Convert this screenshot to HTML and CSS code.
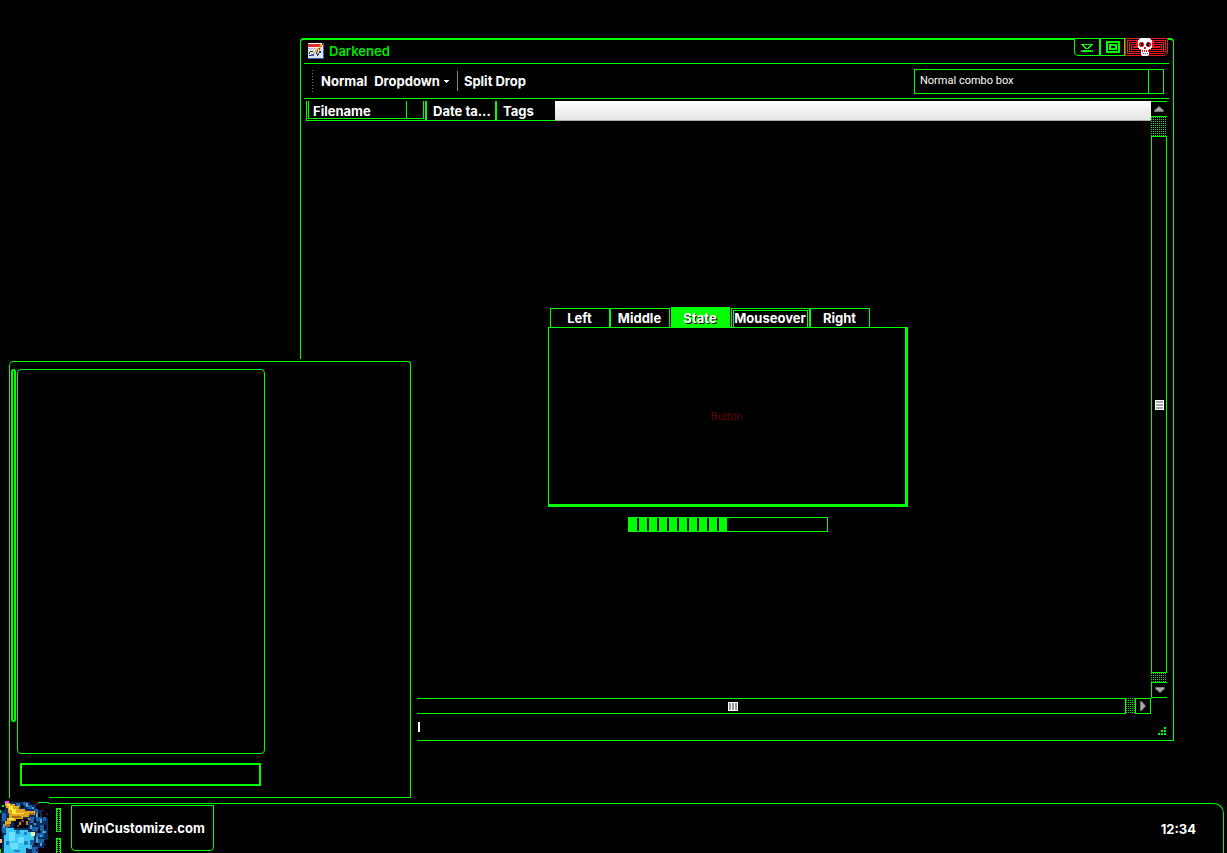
FILE: index.html
```html
<!DOCTYPE html>
<html lang="en">
<head>
<meta charset="utf-8">
<title>Darkened</title>
<link rel="stylesheet" href="styles.css">
</head>
<body>
<main class="desktop">
  <section class="window">
    <header class="titlebar">
      <svg class="app-icon" width="16" height="16" viewBox="0 0 16 16" shape-rendering="crispEdges" aria-hidden="true">
        <path fill="#dce4f4" d="M0 0h16v16H0z"/><path fill="#e02c2c" d="M0 1h14v3H0z"/><path fill="#f8f8f8" d="M0 4h14v2H0zM0 0h14v1H0z"/><path fill="#b8bcc8" d="M0 5h13v1H0z"/>
        <path fill="#283048" d="M2 8h3v1H2zM1 9h1v2H1zM5 9h1v2H5zM1 12h3v1H1zM8 8h1v3H8zM9 11h1v2H9zM10 10h1v2h-1zM11 8h2v2h-2z"/>
        <path fill="#f0b020" d="M12 1h2v2h-2zM11 3h2v2h-2zM9 5h2v2H9zM7 7h2v2H7zM5 9h2v2H5z"/><path fill="#4058c0" d="M3 11h3v2H3zM15 0h1v16h-1zM0 15h16v1H0z"/><path fill="#803020" d="M14 0h1v2h-1zM11 5h1v2h-1zM9 7h1v2H9z"/>
      </svg>
      <h1 class="title">Darkened</h1>
      <div class="controls">
        <button class="control minimize" aria-label="Minimize"><svg width="12" height="8" viewBox="0 0 12 8" shape-rendering="crispEdges"><path fill="#0f0" d="M0 0h12v1H0zM1 1h2v1H1zM9 1h2v1H9zM2 2h2v1H2zM8 2h2v1H8zM3 3h2v1H3zM7 3h2v1H7zM4 4h4v1H4zM2 6h8v1H2zM0 7h12v1H0zM0 6h1v1H0zM11 6h1v1h-1z"/></svg></button>
        <button class="control maximize" aria-label="Maximize"><svg width="14" height="12" viewBox="0 0 14 12" shape-rendering="crispEdges"><path fill="#0f0" fill-rule="evenodd" d="M0 0h14v12H0zM2 2v8h10V2zM3 3h8v6H3zM5 5v2h4V5z"/></svg></button>
        <button class="control close" aria-label="Close"><svg width="43" height="18" viewBox="0 0 43 18" shape-rendering="crispEdges">
          <path fill="none" stroke="#f01820" d="M.5.5h42v14l-3 3H.5zM2.500 2.500h38v11l-2 2h-36zM4.500 4.500h34v9h-34zM6.500 6.500h30v5h-30zM8.500 8.500h26v1h-26z"/>
          <path fill="#f01820" d="M11 3h2v5h-2zM27 3h2v5h-2z"/>
          <path fill="#fff" d="M15 0h10v1h1v1h1v8h-1v1h-2v6h-1v1h-6v-1h-1v-6h-2v-1h-1V2h1V1h1z"/>
          <path fill="#e01820" d="M15 4h3v1h1v3h-1v1h-3V8h-1V5h1zM22 4h3v1h1v3h-1v1h-3V8h-1V5h1zM19 9h2v2h-2zM17 12h1v2h-1zM19 12h1v2h-1zM21 12h1v2h-1zM23 12h1v2h-1zM18 15h1v1h-1zM20 15h1v1h-1zM22 15h1v1h-1z"/>
          <path fill="#000" d="M16 5h2v3h-2zM22 5h2v3h-2z"/>
        </svg></button>
      </div>
    </header>
    <div class="toolbar">
      <span class="grip"></span>
      <button class="tool">Normal</button>
      <button class="tool dropdown">Dropdown <svg width="5" height="3" viewBox="0 0 5 3" shape-rendering="crispEdges"><path fill="#fff" d="M0 0h5v1H4v1H3v1H2V2H1V1H0z"/></svg></button>
      <button class="tool split">Split Drop</button>
      <select class="combo" aria-label="Combo box"><option>Normal combo box</option></select>
    </div>
    <div class="view">
      <div class="pane">
        <div class="columns">
          <button class="column filename"><span class="column-label">Filename</span></button>
          <button class="column date">Date ta...</button>
          <button class="column tags">Tags</button>
          <span class="columns-rest"></span>
        </div>
        <div class="content">
          <div class="tabs" role="tablist">
            <button class="tab" role="tab">Left</button>
            <button class="tab" role="tab">Middle</button>
            <button class="tab selected" role="tab" aria-selected="true">State</button>
            <button class="tab hover" role="tab"><span class="tab-label">Mouseover</span></button>
            <button class="tab" role="tab">Right</button>
          </div>
          <div class="panel" role="tabpanel"><button class="panel-button" disabled>Button</button></div>
          <div class="progress" role="progressbar" aria-label="Progress" aria-valuenow="50"><div class="progress-fill" style="width: 50%"></div></div>
        </div>
        <div class="hscroll">
          <div class="hthumb"><svg width="10" height="9" viewBox="0 0 10 9" shape-rendering="crispEdges"><path fill="#fff" d="M0 0h10v9H0z"/><path fill="#999" d="M1 1h2v7H1zM4 1h2v7H4zM7 1h2v7H7z"/></svg></div>
          <span class="dots htrack"></span>
          <button class="arrow right" aria-label="Scroll right"><svg width="6" height="10" viewBox="0 0 6 10"><path fill="#aaa" stroke="#777" d="M.5.5h1l4 4.500-4 4.500h-1z"/></svg></button>
        </div>
      </div>
      <div class="vscroll">
        <button class="arrow up" aria-label="Scroll up"><svg width="10" height="6" viewBox="0 0 10 6"><path fill="#aaa" stroke="#777" d="M.5 5.500v-1l4.500-4 4.500 4v1z"/></svg></button>
        <span class="dots vtrack"></span>
        <div class="vthumb"><svg width="9" height="10" viewBox="0 0 9 10" shape-rendering="crispEdges"><path fill="#fff" d="M0 0h9v10H0z"/><path fill="#aaa" d="M1 1h7v2H1zM1 4h7v2H1zM1 7h7v2H1z"/></svg></div>
        <span class="dots vtrack-end"></span>
        <button class="arrow down" aria-label="Scroll down"><svg width="10" height="6" viewBox="0 0 10 6"><path fill="#aaa" stroke="#777" d="M.5.5v1l4.500 4 4.500-4v-1z"/></svg></button>
      </div>
    </div>
    <footer class="status">
      <span class="caret"></span>
      <svg class="resize" width="8" height="8" viewBox="0 0 8 8" shape-rendering="crispEdges"><path fill="#0f0" d="M6 0h2v2H6zM3 3h2v2H3zM6 3h2v2H6zM0 6h2v2H0zM3 6h2v2H3zM6 6h2v2H6z"/></svg>
    </footer>
  </section>
  <section class="start-menu" aria-label="Start menu">
    <div class="rail"></div>
    <div class="start-left">
      <div class="programs"></div>
      <input class="search" type="text" aria-label="Search">
    </div>
  </section>
</main>
<footer class="taskbar">
  <button class="orb" aria-label="Start">
    <svg width="49" height="52" viewBox="0 0 49 52" shape-rendering="crispEdges">
      <path fill="#0b2c5c" d="M8 1h22v2h6v6h6v8h6v22h-4v8h-6v5H2V30H1V9h4V3h3z"/>
      <path fill="#1b62a8" d="M16 2h4v3h-4zM23 1h4v4h-4zM28 4h4v4h-4zM34 8h4v4h-4zM36 16h6v4h-6zM40 24h4v6h-4zM32 26h6v4h-6zM36 32h8v4h-8zM30 36h4v8h-4zM2 12h4v8H2zM2 26h6v6H2zM38 38h6v4h-6zM32 46h6v6h-6zM30 16h4v6h-4zM43 16h3v4h-3z"/>
      <path fill="#4aa4d8" d="M18 4h2v2h-2zM26 2h2v4h-2zM32 6h2v2h-2zM36 12h2v4h-2zM40 18h2v4h-2zM30 24h2v4h-2zM42 30h4v2h-4zM36 36h2v6h-2zM28 44h4v4h-4zM40 34h2v2h-2zM3 23h2v4H3zM34 22h2v2h-2zM40 42h2v3h-2z"/>
      <path fill="#000" d="M14 18h14v9H14zM21 4h3v3h-3zM38 12h2v4h-2zM34 18h2v4h-2zM38 28h2v4h-2zM44 24h2v4h-2zM34 42h4v2h-4zM30 1h3v3h-3z"/>
      <path fill="#3ccaf4" d="M6 27h8v2h14v2h6v8h-4v8h-4v5H4V34h2z"/>
      <path fill="#6ae0fa" d="M9 31h6v9H9zM18 36h6v6h-6zM10 42h8v6h-8z"/>
      <path fill="#2082c4" d="M16 29h4v4h-4zM6 40h3v4H6zM24 40h4v4h-4zM14 49h6v2h-6zM24 31h3v3h-3z"/>
      <path fill="#e3a51c" d="M5 2h5v1h5v2h4v3h6v2h10v4h-6v2h-6v2h-7v2h-5v3H8v2H5v-5h2v-3h2v-5H8V7H6z"/>
      <path fill="#ffe43a" d="M7 3h3v2h3v3h3v4h8v1H12V9H9V5H7zM9 17h5v2H9z"/>
      <path fill="#a8681a" d="M12 15h9v2h-9zM29 12h5v2h-5zM6 23h4v3H6z"/>
      <path fill="#d87c3c" d="M19 21h2v3h-2zM26 20h2v4h-2zM28 17h2v2h-2z"/>
      <path fill="#8a4022" d="M21 19h3v2h-3zM17 24h2v2h-2z"/>
      <path fill="#ecf5b2" d="M31 31h4v4h-4z"/><path fill="#f4f" d="M5 0h4v2H5z"/>
      <path fill="#460746" d="M36 2h3v2h-3zM42 8h2v2h-2zM46 12h2v2h-2zM36 48h3v2h-3zM44 42h2v2h-2z"/>
      <path fill="#0f0" d="M0 9h1v3H0zM2 4h2v2H2zM0 48h1v4H0zM38 1h11v1H38z"/><path fill="#f7bb85" d="M0 38h2v4H0z"/>
    </svg>
  </button>
  <div class="bar">
    <div class="handles"><span class="handle"></span><span class="handle"></span></div>
    <button class="task">WinCustomize.com</button>
    <time class="clock">12:34</time>
  </div>
</footer>
</body>
</html>
```
FILE: styles.css
```css
* { box-sizing: border-box; }
:root { --green: #00ff00; }
body {
  margin: 0;
  height: 100vh;
  display: flex;
  flex-direction: column;
  overflow: hidden;
  background: #000;
  color: #fff;
  font: 700 13px/16px Inter, sans-serif;
}
button, input, select {
  margin: 0;
  padding: 0;
  border: 0;
  border-radius: 0;
  background: #000;
  color: inherit;
  font: inherit;
}
svg { display: block; flex: none; }
.desktop { flex: 1; position: relative; min-height: 0; }

.window {
  position: absolute;
  left: 300px;
  right: 53px;
  top: 38px;
  bottom: 62px;
  display: flex;
  flex-direction: column;
  border: 1px solid var(--green);
  border-top-width: 2px;
  border-radius: 4px 4px 0 0;
}
.titlebar {
  display: flex;
  align-items: center;
  height: 24px;
  margin: 0 4px 0 3px;
  padding: 0 1px 2px 4px;
  border-bottom: 1px solid var(--green);
  color: #00e800;
}
.title { flex: 1; margin: 0 0 0 5px; font: inherit; font-weight: 600; }
.controls { display: flex; align-self: flex-start; margin-top: -2px; background: #000; }
.control {
  display: flex;
  align-items: center;
  justify-content: center;
  height: 18px;
  border: 1px solid var(--green);
}
.minimize { width: 26px; padding-top: 2px; border-bottom-left-radius: 4px; }
.maximize { width: 25px; }
.close { width: 43px; border: 0; }

.toolbar {
  display: flex;
  align-items: center;
  height: 35px;
  margin: 0 4px 0 3px;
  padding: 0 5px 0 8px;
  border-bottom: 1px solid var(--green);
}
.grip {
  width: 1px;
  height: 22px;
  margin-right: 8px;
  background: repeating-linear-gradient(#777 0 1px, #000 1px 3px);
}
.dropdown { display: flex; align-items: center; gap: 4px; margin: 0 8px 0 7px; }
.split { height: 20px; padding-left: 6px; border-left: 1px solid #888; }
.combo {
  appearance: none;
  width: 250px;
  height: 25px;
  margin-left: auto;
  padding: 0 5px;
  border: 1px solid var(--green);
  background: linear-gradient(var(--green), var(--green)) right 14px top / 1px 100% no-repeat #000;
  font: 11px/16px Roboto, sans-serif;
}

.view { flex: 1; display: flex; min-height: 0; margin: 2px 6px 0 5px; }
.pane { flex: 1; display: flex; flex-direction: column; min-width: 0; }
.columns { display: flex; height: 20px; }
.column { padding: 0 6px; text-align: left; border-bottom: 1px solid var(--green); }
.filename { display: flex; width: 119px; padding: 0 1px 1px; border-left: 1px solid var(--green); }
.column-label {
  flex: 1;
  height: 18px;
  padding: 2px 4px 0;
  border: solid var(--green);
  border-width: 0 1px 1px;
  background: linear-gradient(var(--green), var(--green)) right 16px top / 1px 100% no-repeat;
}
.date { width: 70px; border-left: 2px solid var(--green); white-space: nowrap; }
.tags { width: 60px; border-left: 2px solid var(--green); }
.columns-rest {
  flex: 1;
  border-bottom: 1px solid #aaa;
  background: linear-gradient(#fff, #e4e4e4);
}
.content {
  flex: 1;
  display: flex;
  flex-direction: column;
  align-items: center;
  justify-content: center;
  padding: 20px 2px 0 0;
}
.tabs { display: flex; align-items: flex-end; width: 360px; padding-left: 2px; }
.tab { width: 60px; height: 19px; border: 1px solid var(--green); border-bottom: 0; }
.selected {
  width: 59px;
  height: 21px;
  margin: 0 1px -1px;
  background: var(--green);
  text-shadow: 1px 1px #000;
}
.hover { width: 79px; padding: 1px 1px 0; }
.tab-label {
  display: flex;
  justify-content: center;
  height: 17px;
  border: 1px solid var(--green);
  border-bottom: 0;
  line-height: 15px;
}
.panel {
  display: flex;
  align-items: center;
  justify-content: center;
  width: 360px;
  height: 180px;
  border: solid var(--green);
  border-width: 1px 3px 3px 1px;
}
.panel-button { color: #600000; font: 11px/16px "Liberation Sans", sans-serif; }
.progress { width: 200px; height: 15px; margin-top: 10px; border: 1px solid var(--green); }
.progress-fill { height: 13px; background: repeating-linear-gradient(90deg, var(--green) 0 8px, #000 8px 10px); }

.dots { background: conic-gradient(at 1px 1px, #000 270deg, #00e000 0) 0 0 / 2px 2px; }
.arrow { display: flex; align-items: center; justify-content: center; width: 16px; height: 16px; border: 1px solid var(--green); }
.vscroll { display: flex; flex-direction: column; width: 16px; margin-bottom: 16px; }
.up { border-width: 1px 0; }
.down { border-right: 0; }
.vtrack { height: 19px; }
.vtrack-end { height: 9px; }
.vthumb { flex: 1; display: flex; align-items: center; justify-content: center; border: 1px solid var(--green); }
.hscroll { display: flex; height: 16px; padding-left: 34px; }
.hthumb { flex: 1; display: flex; align-items: center; justify-content: center; border: 1px solid var(--green); }
.htrack { width: 9px; }

.status { display: flex; align-items: center; justify-content: space-between; height: 26px; padding: 0 7px 1px 117px; }
.caret { width: 2px; height: 10px; background: #fff; }
.resize { margin-top: 8px; }

.start-menu {
  position: absolute;
  left: 9px;
  top: 361px;
  bottom: 5px;
  width: 402px;
  display: flex;
  gap: 1px;
  padding: 7px 1px 12px;
  border: 1px solid var(--green);
  border-bottom: 0;
  border-radius: 5px 3px 0 0;
  background: linear-gradient(var(--green), var(--green)) 39px 100% / 100% 1px no-repeat #000;
  box-shadow: 6px 0 #000, 0 -2px #000;
}
.rail { width: 5px; margin-bottom: 64px; border: 2px solid var(--green); border-radius: 3px; }
.start-left { display: flex; flex-direction: column; width: 248px; }
.programs { flex: 1; margin-bottom: 9px; border: 1px solid var(--green); border-radius: 4px; }
.search { width: 241px; height: 23px; margin-left: 3px; padding: 0 4px; border: 2px solid var(--green); }

.taskbar { display: flex; height: 50px; padding-right: 3px; }
.orb { width: 49px; height: 52px; margin-top: -2px; z-index: 1; }
.bar {
  flex: 1;
  display: flex;
  border: solid var(--green);
  border-width: 1px 1px 0 0;
  border-top-right-radius: 10px;
}
.handles { display: flex; flex-direction: column; gap: 6px; width: 5px; margin: 4px 10px 0 7px; }
.handle {
  flex: none;
  height: 24px;
  border: 1px solid var(--green);
  background: conic-gradient(at 1px 1px, #000 270deg, var(--green) 0) 0 0 / 2px 2px;
}
.task {
  height: 46px;
  margin-top: 1px;
  padding: 0 8px;
  border: 1px solid var(--green);
  border-radius: 0 0 4px 4px;
}
.clock { margin: auto 27px auto auto; }
```
